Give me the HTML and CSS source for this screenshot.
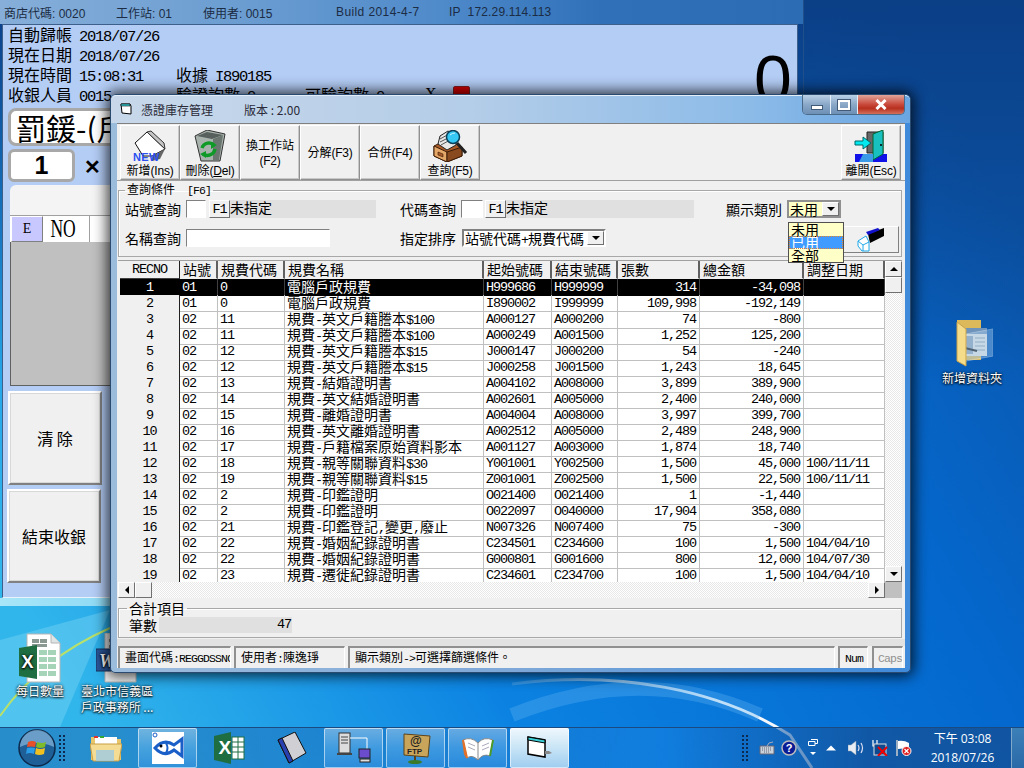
FILE: index.html
```html
<!DOCTYPE html>
<html lang="zh-Hant">
<head>
<meta charset="utf-8">
<title>憑證庫存管理</title>
<link rel="stylesheet" href="styles.css">
</head>
<body>
<div class="desktop">
  <svg class="wallpaper" viewBox="0 0 1024 768" preserveAspectRatio="none">
    <defs>
      <linearGradient id="wp" x1="0" y1="0.75" x2="1" y2="0.3">
        <stop offset="0" stop-color="#31b6ec"/>
        <stop offset="0.35" stop-color="#0b82e2"/>
        <stop offset="0.75" stop-color="#0468ce"/>
        <stop offset="1" stop-color="#0b58ae"/>
      </linearGradient>
      <linearGradient id="wpt" x1="0" y1="0" x2="0" y2="1">
        <stop offset="0" stop-color="#0b3f86"/>
        <stop offset="0.5" stop-color="#0b3f86" stop-opacity="0"/>
      </linearGradient>
      <linearGradient id="swoosh" gradientUnits="userSpaceOnUse" x1="512" y1="0" x2="720" y2="0">
        <stop offset="0" stop-color="#dfeaf5" stop-opacity=".15"/>
        <stop offset="1" stop-color="#f4f8fc"/>
      </linearGradient>
    </defs>
    <rect width="1024" height="768" fill="url(#wp)"/>
    <rect width="1024" height="768" fill="url(#wpt)"/>
    <path d="M0 640 L110 610 L60 727 L0 727Z" fill="#6fd0f2" opacity=".5"/>
    <path d="M0 716 C25 680 60 650 110 628" fill="none" stroke="#b8e06a" stroke-width="2"/>
    <path d="M512 684 C620 670 720 690 790 735 L812 768" fill="none" stroke="url(#swoosh)" stroke-width="3"/>
    <path d="M512 715 C600 680 680 680 760 715" fill="none" stroke="#5fb2f2" stroke-width="14" opacity=".35"/>
  </svg>

  <section class="backwin">
    <div class="backbar">
      <span class="bb bb1">商店代碼: 0020</span>
      <span class="bb bb2">工作站: 01</span>
      <span class="bb bb3">使用者: 0015</span>
      <span class="bb bb4">Build 2014-4-7</span>
      <span class="bb bb5">IP&nbsp; 172.29.114.113</span>
    </div>
    <div class="backclient">
      <div class="bigzero">0</div>
      <div class="info"><span class="col1">自動歸帳<span class="ml">2018/07/26</span></span></div>
      <div class="info"><span class="col1">現在日期<span class="ml">2018/07/26</span></span></div>
      <div class="info"><span class="col1">現在時間<span class="ml">15:08:31</span></span><span class="col2">收據<span class="ml">I890185</span></span></div>
      <div class="info"><span class="col1">收銀人員<span class="ml">0015</span></span><span class="col2">驗證詢數<span class="ml">0</span></span><span class="col3">可驗詢數<span class="ml">0</span></span><span class="colx">X</span><span class="redbox"></span></div>
      <div class="namebox">罰鍰-(戶政規費)</div>
      <div class="qtyrow"><div class="qtybox">1</div><span class="times">✕</span></div>
      <div class="salespanel">
        <div class="salestab"></div>
        <div class="saleshead"><span class="e-btn">E</span><span class="no-cell"><span class="no-t">NO</span></span><span class="no-rest"></span></div>
        <div class="salesbody"></div>
      </div>
      <button class="bigbtn bb-clear">清 除</button>
      <button class="bigbtn bb-end">結束收銀</button>
    </div>
  </section>

  <div class="deskicon di-excel">
    <svg width="42" height="50" viewBox="0 0 42 50"><path d="M8 1H32L41 10V49H8Z" fill="#fff" stroke="#b5b5b5"/><path d="M32 1V10H41" fill="#dfe5e5" stroke="#b5b5b5"/><g fill="#8a9a92"><rect x="13" y="6" width="7" height="4"/><rect x="21" y="6" width="7" height="4"/><rect x="13" y="11" width="15" height="3"/></g><g fill="#a5d4b8"><rect x="20" y="17" width="8" height="5"/><rect x="29" y="17" width="8" height="5"/><rect x="20" y="24" width="8" height="5"/><rect x="29" y="24" width="8" height="5"/><rect x="20" y="31" width="8" height="5"/><rect x="29" y="31" width="8" height="5"/><rect x="20" y="38" width="8" height="5"/><rect x="29" y="38" width="8" height="5"/></g><path d="M0 15 L18 12 V46 L0 43Z" fill="#1e6e42"/><text x="8.500" y="35" class="ico-x">X</text></svg>
    <span>每日數量</span>
  </div>
  <div class="deskicon di-word">
    <svg width="42" height="50" viewBox="0 0 42 50"><path d="M9 0H40V49H9Z" fill="#eee" stroke="#b5b5b5"/><rect x="13" y="6" width="8" height="3" fill="#8a8a8a"/><rect x="13" y="12" width="8" height="3" fill="#8a8a8a"/><rect x="0" y="16" width="24" height="22" fill="#2a5699" stroke="#16325f"/><text x="3" y="34" class="ico-w">W</text></svg>
    <span>臺北市信義區<br>戶政事務所 ...</span>
  </div>
  <div class="deskicon di-folder">
    <svg width="42" height="50" viewBox="0 0 42 50"><path d="M6 0H30V40H6Z" fill="#dcb95a"/><path d="M10 8H36V36H10Z" fill="#e8e8e4"/><path d="M10 8H36V14H10Z" fill="#6f94bc"/><path d="M14 16H22V34H14Z" fill="#8aa0b4"/><path d="M24 18H34M24 22H34M24 26H34M24 30H34" stroke="#8a98a6"/><path d="M14 28L26 31" stroke="#111" stroke-width="2"/><path d="M15 14L42 9V36L15 41Z" fill="#9ec6ea" opacity=".45" stroke="#dcecf8"/><path d="M6 2L15 9V46L6 41Z" fill="#f4dc8a" stroke="#c9a24a"/></svg>
    <span>新增資料夾</span>
  </div>

  <section class="dialog">
    <header class="dlgbar">
      <svg class="dlgicon" width="12" height="12" viewBox="0 0 12 12"><path d="M1 1H10L11 3V11L2 10Z" fill="#fff" stroke="#000"/><path d="M1 1H10V3H1Z" fill="#39d0d8" stroke="#000" stroke-width=".6"/></svg>
      <span class="dlgtitle">憑證庫存管理</span>
      <span class="dlgver">版本 : 2.00</span>
      <div class="winbtns">
        <span class="wb wb-min"><i></i></span>
        <span class="wb wb-max"><i></i></span>
        <span class="wb wb-close">
          <svg width="12" height="11" viewBox="0 0 12 11"><path d="M1.500 1 L10.500 10 M10.500 1 L1.500 10" stroke="#fff" stroke-width="3"/></svg>
        </span>
      </div>
    </header>
    <div class="client">
      <div class="toolbar">
        <button class="tbtn">
          <svg width="36" height="32" viewBox="0 0 36 32"><path d="M3 13 L15 2 L33 19 L20 26 H11Z" fill="#fff" stroke="#111"/><path d="M15 2 L19 1 L32 13 L33 19Z" fill="#c4c4c4" stroke="#333"/><path d="M20 26 L33 19 L28 29 L20 31Z" fill="#666"/><text x="1" y="31" class="ico-new">NEW</text></svg>
          <span class="tl">新增<span class="ls">(Ins)</span></span>
        </button>
        <button class="tbtn">
          <svg width="36" height="32" viewBox="0 0 36 32"><path d="M3 6 L15 0 L33 4 L28 31 H9Z" fill="#a9b3ae" stroke="#333"/><path d="M5 6 L15 2 L31 5 L20 9Z" fill="#57605c"/><path d="M21 9 L31 5 L27 30 H21Z" fill="#6c7670"/><path d="M10 18 C12 12 19 12 22 15 M23 19 C22 25 15 27 11 24" fill="none" stroke="#0f9a28" stroke-width="3.500"/><path d="M19 12 L25 15 L19 19Z M14 21 L8 24 L14 28Z" fill="#0f9a28"/></svg>
          <span class="tl">刪除<span class="ls">(<u>D</u>el)</span></span>
        </button>
        <button class="tbtn"><span class="tl">換工作站<br><span class="ls">(F2)</span></span></button>
        <button class="tbtn"><span class="tl">分解<span class="ls">(F3)</span></span></button>
        <button class="tbtn"><span class="tl">合併<span class="ls">(F4)</span></span></button>
        <button class="tbtn">
          <svg width="36" height="32" viewBox="0 0 36 32"><path d="M2 16 L10 12 L24 14 L30 17 V26 L15 32 L2 26Z" fill="#a85a28" stroke="#3c1c06"/><path d="M2 16 L15 22 V32 L2 26Z" fill="#e6a868" stroke="#3c1c06"/><path d="M15 22 L30 17 V26 L15 32Z" fill="#8a4a20" stroke="#3c1c06"/><path d="M6 14 L8 6 L16 1 L24 6 L24 15 L15 20Z" fill="#e8e8e8" stroke="#222"/><path d="M8 9 L17 4 M8 12 L18 7 M9 15 L18 10" stroke="#555"/><path d="M6 22L11 24V27L6 25Z" fill="#a85a28" stroke="#3c1c06" stroke-width=".6"/><path d="M25 13 L34 23" stroke="#222" stroke-width="3"/><circle cx="21" cy="7" r="6.500" fill="#36c8f5" stroke="#0a3f58" stroke-width="1.500"/><path d="M18 5 Q20 3 23 3" stroke="#cff3ff" fill="none"/></svg>
          <span class="tl">查詢<span class="ls">(F5)</span></span>
        </button>
        <button class="tbtn tbtn-exit">
          <svg width="36" height="32" viewBox="0 0 36 32"><rect x="2" y="24" width="32" height="8" fill="#1010e8"/><path d="M14 2 H30 V23 H14Z" fill="#666" stroke="#222"/><path d="M20 30 L30 24 V0 L20 4Z" fill="#18c0c0" stroke="#063"/><circle cx="28" cy="15" r="1" fill="#000"/><path d="M2 11 H10 V7 L18 13 L10 19 V15 H2Z" fill="#00e8f0" stroke="#066"/><path d="M10 24H20V32H6Z" fill="#3a9ae8"/></svg>
          <span class="tl">離開<span class="ls">(Esc)</span></span>
        </button>
      </div>

      <fieldset class="query">
        <legend>查詢條件<span class="l lf6">[F6]</span></legend>
        <div class="qrow">
          <label class="qlabel">站號查詢</label>
          <span class="input w20"></span>
          <button class="f1">F1</button>
          <span class="grey w146">未指定</span>
          <label class="qlabel m24">代碼查詢</label>
          <span class="input w22"></span>
          <button class="f1 f1b">F1</button>
          <span class="grey w188">未指定</span>
          <label class="qlabel m32">顯示類別</label>
          <span class="combo combo-y"><span class="combotext">未用</span><span class="arrow"><i></i></span></span>
        </div>
        <div class="qrow">
          <label class="qlabel">名稱查詢</label>
          <span class="input w144"></span>
          <label class="qlabel m70">指定排序</label>
          <span class="combo combo-s"><span class="combotext">站號代碼<span class="l">+</span>規費代碼</span><span class="arrow"><i></i></span></span>
          <button class="erase">
            <svg width="30" height="24" viewBox="0 0 30 24"><path d="M12 6 L28 0 V8 L14 15Z" fill="#000"/><path d="M10 4 L22 0 L24 2 L12 7Z" fill="#1111cc"/><path d="M2 13 L10 8 L13 14 V23 L6 23 L2 18Z" fill="#fff" stroke="#1fa8e8"/><path d="M2 13 L7 17 V23 M7 17 L13 14" fill="none" stroke="#1fa8e8"/></svg>
          </button>
        </div>
      </fieldset>

      <div class="gridbox">
        <div class="gridmain">
          <div class="grid">
            <div class="row head"><div class="fix">RECNO</div><div class="c">站號</div><div class="c">規費代碼</div><div class="c">規費名稱</div><div class="c">起始號碼</div><div class="c">結束號碼</div><div class="c">張數</div><div class="c">總金額</div><div class="c">調整日期</div></div>
            <div class="row sel"><div class="fix">1</div><div class="c m">01</div><div class="c m">0</div><div class="c">電腦戶政規費</div><div class="c m">H999686</div><div class="c m">H999999</div><div class="c m r">314</div><div class="c m r">-34,098</div><div class="c m"></div></div>
            <div class="row"><div class="fix">2</div><div class="c m">01</div><div class="c m">0</div><div class="c">電腦戶政規費</div><div class="c m">I890002</div><div class="c m">I999999</div><div class="c m r">109,998</div><div class="c m r">-192,149</div><div class="c m"></div></div>
            <div class="row"><div class="fix">3</div><div class="c m">02</div><div class="c m">11</div><div class="c">規費<span class="l">-</span>英文戶籍謄本<span class="l">$100</span></div><div class="c m">A000127</div><div class="c m">A000200</div><div class="c m r">74</div><div class="c m r">-800</div><div class="c m"></div></div>
            <div class="row"><div class="fix">4</div><div class="c m">02</div><div class="c m">11</div><div class="c">規費<span class="l">-</span>英文戶籍謄本<span class="l">$100</span></div><div class="c m">A000249</div><div class="c m">A001500</div><div class="c m r">1,252</div><div class="c m r">125,200</div><div class="c m"></div></div>
            <div class="row"><div class="fix">5</div><div class="c m">02</div><div class="c m">12</div><div class="c">規費<span class="l">-</span>英文戶籍謄本<span class="l">$15</span></div><div class="c m">J000147</div><div class="c m">J000200</div><div class="c m r">54</div><div class="c m r">-240</div><div class="c m"></div></div>
            <div class="row"><div class="fix">6</div><div class="c m">02</div><div class="c m">12</div><div class="c">規費<span class="l">-</span>英文戶籍謄本<span class="l">$15</span></div><div class="c m">J000258</div><div class="c m">J001500</div><div class="c m r">1,243</div><div class="c m r">18,645</div><div class="c m"></div></div>
            <div class="row"><div class="fix">7</div><div class="c m">02</div><div class="c m">13</div><div class="c">規費<span class="l">-</span>結婚證明書</div><div class="c m">A004102</div><div class="c m">A008000</div><div class="c m r">3,899</div><div class="c m r">389,900</div><div class="c m"></div></div>
            <div class="row"><div class="fix">8</div><div class="c m">02</div><div class="c m">14</div><div class="c">規費<span class="l">-</span>英文結婚證明書</div><div class="c m">A002601</div><div class="c m">A005000</div><div class="c m r">2,400</div><div class="c m r">240,000</div><div class="c m"></div></div>
            <div class="row"><div class="fix">9</div><div class="c m">02</div><div class="c m">15</div><div class="c">規費<span class="l">-</span>離婚證明書</div><div class="c m">A004004</div><div class="c m">A008000</div><div class="c m r">3,997</div><div class="c m r">399,700</div><div class="c m"></div></div>
            <div class="row"><div class="fix">10</div><div class="c m">02</div><div class="c m">16</div><div class="c">規費<span class="l">-</span>英文離婚證明書</div><div class="c m">A002512</div><div class="c m">A005000</div><div class="c m r">2,489</div><div class="c m r">248,900</div><div class="c m"></div></div>
            <div class="row"><div class="fix">11</div><div class="c m">02</div><div class="c m">17</div><div class="c">規費<span class="l">-</span>戶籍檔案原始資料影本</div><div class="c m">A001127</div><div class="c m">A003000</div><div class="c m r">1,874</div><div class="c m r">18,740</div><div class="c m"></div></div>
            <div class="row"><div class="fix">12</div><div class="c m">02</div><div class="c m">18</div><div class="c">規費<span class="l">-</span>親等關聯資料<span class="l">$30</span></div><div class="c m">Y001001</div><div class="c m">Y002500</div><div class="c m r">1,500</div><div class="c m r">45,000</div><div class="c m">100/11/11</div></div>
            <div class="row"><div class="fix">13</div><div class="c m">02</div><div class="c m">19</div><div class="c">規費<span class="l">-</span>親等關聯資料<span class="l">$15</span></div><div class="c m">Z001001</div><div class="c m">Z002500</div><div class="c m r">1,500</div><div class="c m r">22,500</div><div class="c m">100/11/11</div></div>
            <div class="row"><div class="fix">14</div><div class="c m">02</div><div class="c m">2</div><div class="c">規費<span class="l">-</span>印鑑證明</div><div class="c m">O021400</div><div class="c m">O021400</div><div class="c m r">1</div><div class="c m r">-1,440</div><div class="c m"></div></div>
            <div class="row"><div class="fix">15</div><div class="c m">02</div><div class="c m">2</div><div class="c">規費<span class="l">-</span>印鑑證明</div><div class="c m">O022097</div><div class="c m">O040000</div><div class="c m r">17,904</div><div class="c m r">358,080</div><div class="c m"></div></div>
            <div class="row"><div class="fix">16</div><div class="c m">02</div><div class="c m">21</div><div class="c">規費<span class="l">-</span>印鑑登記<span class="l">,</span>變更<span class="l">,</span>廢止</div><div class="c m">N007326</div><div class="c m">N007400</div><div class="c m r">75</div><div class="c m r">-300</div><div class="c m"></div></div>
            <div class="row"><div class="fix">17</div><div class="c m">02</div><div class="c m">22</div><div class="c">規費<span class="l">-</span>婚姻紀錄證明書</div><div class="c m">C234501</div><div class="c m">C234600</div><div class="c m r">100</div><div class="c m r">1,500</div><div class="c m">104/04/10</div></div>
            <div class="row"><div class="fix">18</div><div class="c m">02</div><div class="c m">22</div><div class="c">規費<span class="l">-</span>婚姻紀錄證明書</div><div class="c m">G000801</div><div class="c m">G001600</div><div class="c m r">800</div><div class="c m r">12,000</div><div class="c m">104/07/30</div></div>
            <div class="row"><div class="fix">19</div><div class="c m">02</div><div class="c m">23</div><div class="c">規費<span class="l">-</span>遷徙紀錄證明書</div><div class="c m">C234601</div><div class="c m">C234700</div><div class="c m r">100</div><div class="c m r">1,500</div><div class="c m">104/04/10</div></div>
          </div>
          <div class="vscroll">
            <span class="sb sb-up"><i class="tri-up"></i></span>
            <span class="sb sb-vthumb"></span>
            <span class="sb-fill"></span>
            <span class="sb sb-down"><i class="tri-down"></i></span>
          </div>
        </div>
        <div class="hscroll">
          <span class="sb sb-left"><i class="tri-left"></i></span>
          <span class="sb sb-hthumb"></span>
          <span class="sb-fill"></span>
          <span class="sb sb-right"><i class="tri-right"></i></span>
          <span class="sb-corner"></span>
        </div>
      </div>

      <fieldset class="total">
        <legend>合計項目</legend>
        <div class="totalrow"><label>筆數</label><span class="totalval">47</span></div>
      </fieldset>

      <footer class="status">
        <span class="pn pn1">畫面代碼<span class="l">:REGGDSSNC</span></span>
        <span class="pn pn2">使用者<span class="l">:</span>陳逸琤</span>
        <span class="pn pn3">顯示類別<span class="l">-&gt;</span>可選擇篩選條件。</span>
        <span class="pn pn4"><span class="l">Num</span></span>
        <span class="pn pn5"><span class="l">Caps</span></span>
      </footer>
    </div>

    <ul class="dropdown">
      <li>未用</li>
      <li class="active">已用</li>
      <li>全部</li>
    </ul>
  </section>

  <nav class="taskbar">
    <div class="orb">
      <svg width="38" height="38" viewBox="0 0 38 38"><circle cx="19" cy="19" r="18" fill="#1f5f98" stroke="#0b2a4c" stroke-width="1.500"/><path d="M2 18 A17 17 0 0 1 36 18 Q19 10 2 18Z" fill="#9cc8e8" opacity=".6"/><path d="M10 13 Q14 11 18 13 L17 18 Q13 17 9 18Z" fill="#e8502a"/><path d="M19 13 Q24 15 28 13 L27 18 Q22 20 18 18Z" fill="#7ebb2a"/><path d="M9 19 Q13 18 17 19 L16 25 Q12 23 8 25Z" fill="#2a9ce8"/><path d="M18 19 Q22 21 27 19 L26 25 Q21 27 17 25Z" fill="#f0c020"/></svg>
    </div>
    <span class="grip"></span>
    <div class="tasks">
      <span class="task">
        <svg width="32" height="28" viewBox="0 0 32 28"><path d="M1 3H12L14 5H31V26H1Z" fill="#e9c66a"/><rect x="5" y="3" width="22" height="8" fill="#fff"/><path d="M4 2h4v2H4z" fill="#d33"/><path d="M10 2h4v2h-4z" fill="#3a3"/><path d="M0 10H32L29 27H3Z" fill="#f5dc94" stroke="#c89e45"/><path d="M6 16H24V27H6Z" fill="#9ccbe4" opacity=".8"/></svg>
      </span>
      <span class="task on">
        <svg width="32" height="32" viewBox="0 0 32 32"><rect x="0" y="0" width="32" height="32" fill="#fff"/><path d="M3 16 Q12 6 22 13 L30 7 V24 L22 18 Q12 26 3 16Z" fill="#fff" stroke="#1a5fc8" stroke-width="3"/><circle cx="9" cy="14" r="1.500" fill="#000"/><path d="M14 11 Q17 16 14 21" fill="none" stroke="#1a5fc8" stroke-width="2"/><circle cx="3" cy="3" r="2" fill="none" stroke="#1a5fc8"/></svg>
      </span>
      <span class="task">
        <svg width="32" height="32" viewBox="0 0 32 32"><path d="M0 4 L17 0 V32 L0 28Z" fill="#1e6e42"/><text x="4.500" y="22" class="ico-x2">X</text><rect x="18" y="5" width="12" height="22" fill="#fff" stroke="#1e6e42"/><path d="M18 10H30M18 15H30M18 20H30M24 5V27" stroke="#1e6e42"/></svg>
      </span>
      <span class="task">
        <svg width="30" height="32" viewBox="0 0 30 32"><path d="M1 8 L18 0 L29 21 L12 31Z" fill="#cfcfd4" stroke="#111"/><path d="M1 8 L5 6 L16 29 L12 31Z" fill="#2840b0" stroke="#111"/></svg>
      </span>
      <span class="task on">
        <svg width="34" height="32" viewBox="0 0 34 32"><rect x="2" y="1" width="11" height="20" fill="#ddd" stroke="#333"/><path d="M4 5H11M4 8H11M4 11H11" stroke="#444"/><path d="M0 22H15" stroke="#444" stroke-width="2"/><path d="M13 6H30V18" fill="none" stroke="#fff"/><rect x="22" y="17" width="11" height="9" fill="#6a4ccc" stroke="#222"/><rect x="23" y="27" width="10" height="3" fill="#ddd" stroke="#222"/></svg>
      </span>
      <span class="task on">
        <svg width="32" height="32" viewBox="0 0 32 32"><path d="M4 2 L30 4 L28 25 L4 23Z" fill="#c9a55c" stroke="#5d4318"/><path d="M15 24V29" stroke="#5d4318" stroke-width="2"/><ellipse cx="15" cy="30" rx="7" ry="2" fill="#3a7a2a"/><text x="10" y="13" class="ico-at">@</text><text x="7" y="22" class="ico-ftp">FTP</text></svg>
      </span>
      <span class="task on">
        <svg width="32" height="28" viewBox="0 0 32 28"><path d="M1 6 Q9 2 16 9 Q22 2 31 6 L28 22 Q21 19 16 26 Q10 20 5 24Z" fill="#fff" stroke="#888"/><path d="M1 6 L5 24 L3 20Z" stroke="#e0702a" stroke-width="2"/><path d="M31 6 L28 22" stroke="#4a9a2a" stroke-width="2"/><path d="M16 9V26" stroke="#888"/><path d="M6 9L13 12M6 13L13 16M20 12L27 9M20 16L27 13" stroke="#aab"/></svg>
      </span>
      <span class="task on last">
        <svg width="26" height="24" viewBox="0 0 26 24"><path d="M1 1 L18 4 V21 L1 18Z" fill="#fff" stroke="#000" stroke-width="1.500"/><path d="M1 1 L18 4 V7 L1 4Z" fill="#39d0d8" stroke="#000"/><path d="M18 15 H22 L25 17 L22 18 H18Z" fill="#888"/></svg>
      </span>
    </div>
    <div class="tray">
      <span class="grip"></span>
      <svg class="t-kb" width="16" height="14" viewBox="0 0 16 14"><path d="M1 5H15V13H1Z" fill="#c9d2da" stroke="#667"/><path d="M3 7H13M3 9H13M5 11H11" stroke="#667" stroke-dasharray="1 1"/><path d="M8 5 Q9 1 14 1" fill="none" stroke="#aab"/></svg>
      <svg class="t-help" width="16" height="16" viewBox="0 0 16 16"><circle cx="8" cy="8" r="7" fill="#0a1c96" stroke="#bbb" stroke-width="1.500"/><text x="8" y="12" class="ico-q">?</text></svg>
      <svg class="t-rest" width="10" height="18" viewBox="0 0 10 18"><path d="M3 .5H9.500V4.500H7M.5 2.500H7V6.500H.5Z" fill="none" stroke="#fff"/><path d="M2 13H8L5 16Z" fill="#fff"/></svg>
      <svg class="t-up" width="10" height="6" viewBox="0 0 10 6"><path d="M0 5.500L5 .5L10 5.500Z" fill="#fff"/></svg>
      <svg class="t-vol" width="16" height="14" viewBox="0 0 16 14"><path d="M0 4H3L8 0V14L3 10H0Z" fill="#e8eef4" stroke="#8899aa" stroke-width=".5"/><path d="M10 4 Q12 7 10 10 M13 2 Q16 7 13 12" fill="none" stroke="#dde" stroke-width="1.200"/></svg>
      <svg class="t-net" width="16" height="16" viewBox="0 0 16 16"><path d="M1 0V6H5V0" fill="none" stroke="#fff" stroke-width="1.200"/><rect x="2" y="4" width="12" height="11" fill="#0d4a90" stroke="#ddd"/><path d="M6 7L15 16M15 7L6 16" stroke="#e00" stroke-width="2"/></svg>
      <svg class="t-flag" width="16" height="16" viewBox="0 0 16 16"><path d="M1 0V16" stroke="#ccc" stroke-width="1.500"/><path d="M2 1 Q8 0 13 3 V8 L2 9Z" fill="#fff"/><circle cx="10.500" cy="11" r="4.500" fill="#e02020" stroke="#fff"/><path d="M8.500 9L12.500 13M12.500 9L8.500 13" stroke="#fff" stroke-width="1.200"/></svg>
      <div class="clock"><span>下午 03:08</span><span>2018/07/26</span></div>
      <span class="showdesk"></span>
    </div>
  </nav>
</div>
</body>
</html>
```
FILE: styles.css
```css
* { box-sizing: border-box; }
html, body { margin: 0; padding: 0; }
body { font-family: "Noto Sans CJK TC", "Liberation Sans", sans-serif; font-size: 14px; color: #000; }
button { font: inherit; color: inherit; padding: 0; margin: 0; }
.desktop { position: relative; width: 1024px; height: 768px; overflow: hidden; background: #0b6fd0; }
.wallpaper { position: absolute; inset: 0; width: 1024px; height: 768px; }

/* half-width latin: 7px advance beside 14px CJK */
.l, .m { font-family: "Liberation Mono", "DejaVu Sans Mono", monospace; font-size: 13.5px; letter-spacing: -1.1px; }
.ml { font-family: "Liberation Mono", "DejaVu Sans Mono", monospace; font-size: 15.5px; letter-spacing: -1.3px; margin-left: 7px; }
.ls { font-family: "Liberation Sans", sans-serif; font-size: 12px; letter-spacing: -.2px; }

/* ---------- background window ---------- */
.backwin { position: absolute; left: 0; top: 0; width: 804px; height: 606px; display: flex; flex-direction: column; padding-right: 5px; border-right: 1px solid #20508a; }
.backbar { height: 24px; margin-right: -5px; display: flex; align-items: center; padding-left: 4px; font-size: 12px; color: #1b2c44; font-family: "Liberation Sans", "Noto Sans CJK TC", sans-serif; background: linear-gradient(90deg, #86aed9 0, #6b9dd1 30%, #4f8aca 55%, #2f70b8 75%, #2c6cb4 100%); }
.bb { white-space: nowrap; }
.bb1 { width: 112px; }
.bb2 { width: 87px; }
.bb3 { width: 133px; }
.bb4 { width: 113px; letter-spacing: .4px; }
.bb5 { letter-spacing: .15px; }
.backclient { position: relative; flex: 1; margin: 0 0 8px 2px; background: #b4cdf5; border: 1px solid #3c5f8c; border-bottom-color: #e8f2fb; padding: 0 0 0 5px; font-size: 16px; }
.backwin::after { content: ""; position: absolute; left: 0; right: 0; bottom: 0; height: 8px; background: linear-gradient(90deg, #a8e6f8, #4cb8ea 50%, #2a8ad8); }
.info { display: flex; height: 20px; line-height: 18px; white-space: nowrap; }
.col1 { width: 168px; }
.col2 { width: 129px; }
.col3 { width: 120px; }
.colx { width: 28px; font-family: "Liberation Serif", serif; }
.redbox { width: 17px; height: 14px; margin-top: 1px; background: #d80000; border: 1px solid #802020; border-radius: 2px; }
.bigzero { position: absolute; left: 751px; top: 20px; font: 68px/1 "Liberation Sans", sans-serif; }
.namebox { width: 300px; height: 38px; margin-top: 3px; background: #fff; border: 3px solid #a8a8a8; border-radius: 8px; font-size: 30px; line-height: 32px; padding-left: 5px; white-space: nowrap; overflow: hidden; }
.qtyrow { display: flex; align-items: center; margin-top: 3px; height: 33px; }
.qtybox { width: 67px; height: 33px; background: #fff; border: 3px solid #a8a8a8; border-radius: 6px; text-align: center; font: bold 25px/27px "Liberation Sans", sans-serif; }
.times { margin-left: 9px; font-size: 20px; font-weight: 700; }
.salespanel { margin: 3px 0 0 2px; width: 300px; }
.salestab { height: 30px; background: #f4f4f4; border-radius: 6px 0 0 0; }
.saleshead { display: flex; height: 27px; background: #fff; border-top: 1px solid #a0a0a0; }
.e-btn { width: 32px; background: #c8c8ff; border: 1px solid #808080; border-top-color: #fff; border-left-color: #fff; text-align: center; font: 14px/24px "Liberation Serif", serif; margin-left: 1px; }
.no-cell { width: 47px; text-align: center; border-right: 1px solid #a0a0a0; padding-right: 6px; }
.no-t { display: inline-block; font: 25px/26px "Liberation Serif", serif; transform: scaleX(.7); }
.no-rest { flex: 1; }
.salesbody { height: 144px; background: #c0c0c0; border-left: 1px solid #606060; border-bottom: 1px solid #606060; }
.bigbtn { display: block; background: #f0f0f0; border: 2px solid; border-color: #fff #808080 #808080 #fff; box-shadow: 0 0 0 1px #d8d8d8 inset; width: 94px; height: 94px; font-size: 16px; }
.bb-clear { margin-top: 5px; }
.bb-end { margin: 4px 0 0 -1px; }

/* ---------- desktop icons ---------- */
.deskicon { position: absolute; width: 76px; display: flex; flex-direction: column; align-items: center; color: #fff; font-size: 12px; line-height: 16px; text-align: center; text-shadow: 0 1px 2px #000, 0 0 3px #000; }
.deskicon span { white-space: nowrap; }
.di-excel { left: 2px; top: 633px; }
.di-word { left: 79px; top: 633px; }
.di-folder { left: 934px; top: 320px; }
.ico-x { font: bold 18px "Liberation Sans", sans-serif; fill: #fff; text-anchor: middle; }
.ico-x2 { font: bold 19px "Liberation Sans", sans-serif; fill: #fff; }
.ico-w { font: italic bold 18px "Liberation Serif", serif; fill: #fff; }
.ico-new { font: bold 11px "Liberation Sans", sans-serif; fill: #2a50f0; letter-spacing: .4px; }
.ico-at { font: bold 12px "Liberation Sans", sans-serif; fill: #222; }
.ico-ftp { font: bold 8px "Liberation Sans", sans-serif; fill: #222; }
.ico-q { font: bold 11px "Liberation Sans", sans-serif; fill: #fff; text-anchor: middle; }

/* ---------- dialog window ---------- */
.dialog { position: absolute; left: 110px; top: 94px; width: 801px; height: 579px; padding: 0 5px 4px 6px; border-radius: 6px 6px 5px 5px; border: 1px solid #2a4a70; background: linear-gradient(90deg, #9cbcdc 0, #7ea8d8 50%, #3f8ada 100%); box-shadow: 0 0 14px 3px rgba(0,0,0,.75); display: flex; flex-direction: column; }
.dlgbar { height: 28px; margin: 0 -5px 0 -6px; padding-left: 9px; display: flex; align-items: center; font-size: 12px; background: linear-gradient(90deg, #c8d8ea 0, #b4cde8 45%, #8cbbe8 80%, #6aa6e2 100%); position: relative; border-radius: 5px 5px 0 0; border-top: 1px solid #e4eef8; }
.dlgicon { margin-top: -1px; }
.dlgtitle { margin-left: 9px; color: #2a2a38; }
.dlgver { margin-left: 31px; color: #2a2a38; }
.winbtns { position: absolute; right: 5px; top: -1px; display: flex; height: 20px; border: 1px solid #4a6a8a; border-top: none; border-radius: 0 0 5px 5px; overflow: hidden; }
.wb { display: flex; align-items: center; justify-content: center; height: 100%; background: linear-gradient(180deg, #b9d0e6, #8aa8c8 50%, #6d90b5); border-right: 1px solid #e4eef8; }
.wb-min { width: 28px; }
.wb-min i { display: block; width: 12px; height: 5px; margin-top: 6px; background: #fff; border: 1px solid #405a78; }
.wb-max { width: 27px; }
.wb-max i { display: block; width: 12px; height: 10px; background: transparent; border: 2px solid #fff; outline: 1px solid #405a78; }
.wb-close { width: 46px; border-right: none; background: linear-gradient(180deg, #e2a49a, #c8483a 50%, #b8301f 70%, #d2705c); }

.client { flex: 1; display: flex; flex-direction: column; background: #f0f0f0; border-top: 1px solid #808080; min-height: 0; }
.toolbar { height: 57px; display: flex; padding: 1px 4px 0 3px; border-bottom: 1px solid #a0a0a0; }
.tbtn { width: 60px; height: 55px; display: flex; flex-direction: column; align-items: center; justify-content: center; background: #f0f0f0; border: 1px solid; border-color: #fff #909090 #909090 #fff; box-shadow: inset -1px -1px 0 #c8c8c8; font-size: 12px; line-height: 15px; }
.tbtn svg { display: block; margin-top: 3px; }
.tl { white-space: nowrap; }
.tbtn-exit { margin-left: auto; }

fieldset { margin: 0; min-width: 0; border: 1px solid #a8a8a8; box-shadow: inset 1px 1px 0 #fff; }
legend { padding: 0 2px; line-height: 16px; font-size: 14px; white-space: nowrap; }
.query legend { font-size: 12px; }
.lf6 { font-size: 11.5px; letter-spacing: -.9px; margin-left: 12px; }
.query { height: 76px; margin: 0 3px 0 1px; padding: 1px 2px 0 6px; display: flex; flex-direction: column; gap: 11px; }
.qrow { display: flex; height: 18px; align-items: stretch; }
.qlabel { width: 56px; line-height: 18px; margin-right: 5px; white-space: nowrap; }
.m24 { margin-left: 24px; }
.m32 { margin-left: 32px; }
.m70 { margin-left: 70px; margin-right: 6px; }
.input { background: #fff; border: 1px solid; border-color: #808080 #fff #fff #808080; }
.w20 { width: 20px; }
.w22 { width: 22px; }
.w144 { width: 144px; }
.f1 { width: 21px; margin-left: 3px; font: 13.5px/15px "Liberation Mono", monospace; letter-spacing: -1.1px; background: #f0f0f0; border: 1px solid; border-color: #fff #707070 #707070 #fff; }
.f1b { margin-left: 2px; }
.grey { background: #e0e0e0; line-height: 15px; white-space: nowrap; }
.w146 { width: 146px; }
.w188 { width: 188px; }
.combo { display: flex; border: 2px solid; border-color: #808080 #fff #fff #808080; line-height: 14px; }
.combotext { flex: 1; padding-left: 1px; white-space: nowrap; }
.combo-y { width: 54px; background: #ffffc8; border-color: #909090; }
.combo-s { width: 144px; background: #fff; }
.arrow { width: 17px; flex: none; display: flex; align-items: center; justify-content: center; background: #f0f0f0; border: 1px solid; border-color: #fff #707070 #707070 #fff; }
.arrow i, .tri-down { display: block; width: 0; height: 0; border: 4px solid transparent; border-top-color: #000; border-bottom: 0; }
.erase { width: 56px; height: 27px; margin: -3px 0 -6px auto; background: #f0f0f0; border: 1px solid; border-color: #fff #808080 #808080 #fff; display: flex; align-items: center; justify-content: center; }

.gridbox { margin: 3px 3px 0 1px; display: flex; flex-direction: column; border-top: 1px solid #a0a0a0; }
.gridmain { display: flex; height: 321px; padding-left: 2px; }
.grid { width: 765px; overflow: hidden; background: #fff; }
.row { display: grid; grid-template-columns: 60px 38px 67px 199px 68px 66px 82px 104px 81px; height: 16px; line-height: 14px; }
.row .c { border-right: 1px solid #c0c0c0; border-bottom: 1px solid #c0c0c0; padding-left: 2px; white-space: nowrap; }
.row .m { padding-top: 2px; }
.row .r { text-align: right; padding-right: 3px; padding-left: 0; }
.fix { background: #f0f0f0; border-right: 1px solid #202020; border-bottom: 1px solid #404040; text-align: center; font: 13.5px/15px "Liberation Mono", monospace; letter-spacing: -1.1px; padding-top: 1px; }
.head { height: 18px; line-height: 16px; }
.head .c { background: #f0f0f0; border-right: 2px solid #606060; border-bottom-color: #f0f0f0; padding-left: 3px; }
.sel, .sel .fix, .sel .c { background: #000; color: #fff; border-color: #000; }
.sel .c { border-right-color: #404040; }

.vscroll { width: 17px; display: flex; flex-direction: column; background: #f6f6f6; }
.hscroll { height: 16px; display: flex; background: #f6f6f6; }
.sb { display: flex; align-items: center; justify-content: center; background: #f0f0f0; border: 1px solid; border-color: #fff #707070 #707070 #fff; flex: none; }
.sb-up, .sb-down { height: 16px; }
.sb-vthumb { height: 16px; }
.sb-fill { flex: 1; background: repeating-conic-gradient(#fff 0 25%, #e8e8e8 0 50%) 0 0 / 2px 2px; }
.sb-left, .sb-hthumb, .sb-right { width: 17px; }
.sb-corner { width: 17px; background: #c0c0c0; }
.tri-up { display: block; width: 0; height: 0; border: 4px solid transparent; border-bottom-color: #000; border-top: 0; }
.tri-left { display: block; width: 0; height: 0; border: 4px solid transparent; border-right-color: #000; border-left: 0; }
.tri-right { display: block; width: 0; height: 0; border: 4px solid transparent; border-left-color: #000; border-right: 0; }

.total { height: 38px; margin: 2px 3px 0 1px; padding: 1px 0 0 10px; }
.total legend { margin-left: -2px; }
.totalrow { display: flex; height: 16px; line-height: 16px; }
.totalrow label { width: 30px; }
.totalval { width: 133px; background: #e0e0e0; text-align: right; padding-right: 1px; font: 13.5px/16px "Liberation Mono", monospace; letter-spacing: -1.1px; }

.status { flex: none; margin-top: auto; height: 29px; background: #f0f0f0; display: flex; gap: 3px; padding: 7px 0 0 1px; box-shadow: inset 0 7px 0 #e2e2e2; white-space: nowrap; font-size: 12px; }
.pn { height: 22px; border: 1px solid; border-color: #909090 #fff #fff #909090; border-width: 2px 1px 0 2px; line-height: 18px; padding-left: 5px; overflow: hidden; }
.pn .l { font-size: 11.5px; letter-spacing: -.9px; }
.pn1 { width: 113px; }
.pn2 { width: 111px; }
.pn3 { width: 487px; }
.pn4 { width: 30px; }
.pn5 { width: 31px; margin-left: 1px; color: #909090; padding-left: 4px; }

.dropdown { position: absolute; left: 677px; top: 127px; width: 56px; height: 41px; margin: 0; padding: 0; list-style: none; background: #ffffc8; border: 1px solid #505050; font-size: 14px; line-height: 13px; z-index: 3; }
.dropdown li { height: 13px; padding-left: 2px; }
.dropdown .active { background: #3f9bff; color: #fff; outline: 1px dotted #e08030; outline-offset: -1px; }

/* ---------- taskbar ---------- */
.taskbar { position: absolute; left: 0; right: 0; bottom: 0; height: 41px; display: flex; align-items: center; background: linear-gradient(90deg, rgba(30,100,170,.5), rgba(30,110,190,.45) 45%, rgba(30,130,225,.35) 65%, rgba(20,80,150,.75) 85%, rgba(20,80,150,.8)); border-top: 1px solid #1a4a80; color: #fff; }
.orb { width: 38px; height: 38px; margin-left: 18px; flex: none; }
.grip { width: 8px; height: 29px; flex: none; margin-left: 2px; background-image: radial-gradient(circle, #0c2a50 1px, transparent 1.200px); background-size: 4px 4px; }
.tasks { display: flex; margin-left: 10px; height: 40px; gap: 3px; }
.task { width: 59px; height: 40px; display: flex; align-items: center; justify-content: center; border-radius: 2px; }
.task.on { background: linear-gradient(180deg, rgba(255,255,255,.35), rgba(130,200,250,.35) 50%, rgba(60,150,230,.45)); box-shadow: inset 0 0 0 1px rgba(255,255,255,.55); }
.task.last { background: linear-gradient(180deg, #f0f8fd, #c8e4f6 50%, #9ecdf0); }
.tray { margin-left: auto; display: flex; align-items: center; height: 40px; flex: none; }
.t-kb { margin-left: 10px; }
.t-help { margin-left: 6px; }
.t-rest { margin-left: 11px; }
.t-up { margin-left: 8px; }
.t-vol { margin-left: 12px; }
.t-net { margin-left: 8px; }
.t-flag { margin-left: 8px; }
.clock { width: 75px; margin-left: 13px; display: flex; flex-direction: column; align-items: center; font: 12px/19px "Open Sans", "Noto Sans CJK TC", sans-serif; }
.showdesk { width: 13px; height: 40px; margin-left: 11px; background: linear-gradient(180deg, #3c80b8, #2a6aa8); border-left: 1px solid #80a8c8; }
```
